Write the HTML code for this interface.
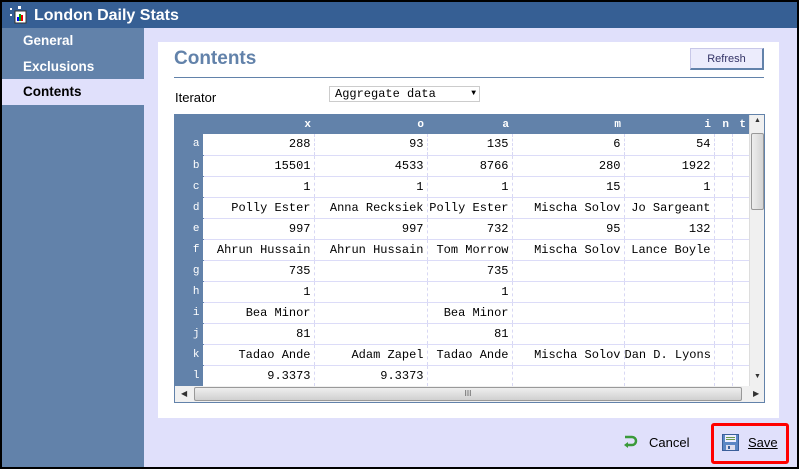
<!DOCTYPE html>
<html><head><meta charset="utf-8"><style>
*{margin:0;padding:0;box-sizing:border-box}
body{width:799px;height:469px;background:#000;position:relative;overflow:hidden;font-family:"Liberation Sans",sans-serif}
.abs{position:absolute}
#title{left:2px;top:2px;width:795px;height:26px;background:#365f94;color:#fff;font-weight:bold;font-size:16px;line-height:27px;padding-left:32px}
#side{left:2px;top:28px;width:142px;height:439px;background:#6282aa}
.nav{position:absolute;left:0;width:142px;height:26px;font-weight:bold;font-size:13.5px;color:#fff;padding-left:21px;line-height:26px}
#main{left:144px;top:28px;width:653px;height:439px;background:#e0e0fb}
#panel{left:158px;top:42px;width:621px;height:376px;background:#fff}
.mono{font-family:"Liberation Mono",monospace;font-size:12px}
table{border-collapse:collapse;table-layout:fixed}
td{height:21px;border-bottom:1px solid #dcdcf8;border-right:1px dashed #d8d8f4;text-align:right;padding-right:3px;white-space:nowrap;overflow:hidden;font-family:"Liberation Mono",monospace;font-size:12px;color:#000}
td.h{background:#6282aa;color:#fff;border-right:1px dashed #fff;border-bottom:1px solid #6282aa;font-size:11px}
tr.hd td{background:#6282aa;color:#fff;height:19px;border:none;font-size:11px;font-weight:bold}
</style></head><body>
<div id="title" class="abs">London Daily Stats</div>
<svg class="abs" style="left:7px;top:6px" width="22" height="18" viewBox="0 0 22 18">
<rect x="3" y="2" width="2" height="2" fill="#fff"/><rect x="3" y="8" width="2" height="2" fill="#fff"/>
<rect x="11" y="0" width="3" height="3" fill="#fff"/>
<rect x="8" y="5" width="11" height="12" fill="#fff" stroke="#333" stroke-width="1"/>
<rect x="10" y="11" width="2" height="4" fill="#00f"/><rect x="12" y="8" width="2" height="7" fill="#0a0"/><rect x="14" y="9" width="2" height="6" fill="#e00"/>
</svg>
<div id="side" class="abs">
<div class="nav" style="top:0">General</div>
<div class="nav" style="top:26px">Exclusions</div>
<div class="nav" style="top:51px;background:#e0e0fb;color:#000">Contents</div>
</div>
<div id="main" class="abs"></div>
<div id="panel" class="abs"></div>
<div class="abs" style="left:174px;top:48px;font-weight:bold;font-size:19px;color:#6282aa">Contents</div>
<div class="abs" style="left:690px;top:48px;width:74px;height:22px;background:#ececfc;border:1px solid #c8c8e8;border-right:2px solid #6282aa;border-bottom:2px solid #6282aa;font-size:11px;color:#333366;text-align:center;line-height:20px">Refresh</div>
<div class="abs" style="left:174px;top:77px;width:590px;height:1px;background:#6282aa"></div>
<div class="abs" style="left:175px;top:90px;font-size:13px;color:#000">Iterator</div>
<div class="abs mono" style="left:329px;top:86px;width:151px;height:16px;border:1px solid #ccc;font-size:12px;line-height:14px;padding-left:5px">Aggregate data<span style="position:absolute;right:3px;top:0;font-size:8px">▼</span></div>
<div class="abs" style="left:174px;top:114px;width:591px;height:289px;border:1px solid #6282aa;background:#fff;overflow:hidden">
<table style="width:574px">
<colgroup><col style="width:28px"><col style="width:111px"><col style="width:113px"><col style="width:85px"><col style="width:112px"><col style="width:90px"><col style="width:18px"><col style="width:17px"></colgroup>
<tr class="hd"><td></td><td>x</td><td>o</td><td>a</td><td>m</td><td>i</td><td>n</td><td>t</td></tr>
<tr><td class="h">a</td><td>288</td><td>93</td><td>135</td><td>6</td><td>54</td><td></td><td></td></tr>
<tr><td class="h">b</td><td>15501</td><td>4533</td><td>8766</td><td>280</td><td>1922</td><td></td><td></td></tr>
<tr><td class="h">c</td><td>1</td><td>1</td><td>1</td><td>15</td><td>1</td><td></td><td></td></tr>
<tr><td class="h">d</td><td>Polly Ester</td><td>Anna Recksiek</td><td>Polly Ester</td><td>Mischa Solov</td><td>Jo Sargeant</td><td></td><td></td></tr>
<tr><td class="h">e</td><td>997</td><td>997</td><td>732</td><td>95</td><td>132</td><td></td><td></td></tr>
<tr><td class="h">f</td><td>Ahrun Hussain</td><td>Ahrun Hussain</td><td>Tom Morrow</td><td>Mischa Solov</td><td>Lance Boyle</td><td></td><td></td></tr>
<tr><td class="h">g</td><td>735</td><td></td><td>735</td><td></td><td></td><td></td><td></td></tr>
<tr><td class="h">h</td><td>1</td><td></td><td>1</td><td></td><td></td><td></td><td></td></tr>
<tr><td class="h">i</td><td>Bea Minor</td><td></td><td>Bea Minor</td><td></td><td></td><td></td><td></td></tr>
<tr><td class="h">j</td><td>81</td><td></td><td>81</td><td></td><td></td><td></td><td></td></tr>
<tr><td class="h">k</td><td>Tadao Ande</td><td>Adam Zapel</td><td>Tadao Ande</td><td>Mischa Solov</td><td>Dan D. Lyons</td><td></td><td></td></tr>
<tr><td class="h">l</td><td>9.3373</td><td>9.3373</td><td></td><td></td><td></td><td></td><td></td></tr>
</table>
<div class="abs" style="left:574px;top:0;width:16px;height:271px;background:#f0f0f0;border-left:1px solid #ddd">
<div style="position:absolute;top:2px;left:4px;font-size:7px;color:#333">▲</div>
<div style="position:absolute;top:18px;left:1px;width:13px;height:77px;background:linear-gradient(90deg,#eee,#d4d4d4);border:1px solid #999;border-radius:2px"></div>
<div style="position:absolute;top:258px;left:4px;font-size:7px;color:#333">▼</div>
</div>
<div class="abs" style="left:0;top:271px;width:590px;height:17px;background:#f0f0f0">
<div style="position:absolute;left:6px;top:3px;font-size:8px;color:#333">◀</div>
<div style="position:absolute;left:19px;top:1px;width:548px;height:14px;background:linear-gradient(#eee,#d0d0d0);border:1px solid #999;border-radius:2px;text-align:center;font-size:8px;line-height:12px;color:#555">III</div>
<div style="position:absolute;left:578px;top:3px;font-size:8px;color:#333">▶</div>
</div>
</div>
<svg class="abs" style="left:622px;top:434px" width="16" height="16" viewBox="0 0 16 16"><path d="M3 3h7a4 4 0 0 1 0 8H4" fill="none" stroke="#3a9a3a" stroke-width="2.5"/><path d="M6 8l-4 3 4 3z" fill="#3a9a3a"/></svg>
<div class="abs" style="left:649px;top:435px;font-size:13px;color:#000">Cancel</div>
<div class="abs" style="left:711px;top:423px;width:78px;height:41px;border:3px solid #ff0000;border-radius:3px"></div>
<svg class="abs" style="left:722px;top:434px" width="17" height="17" viewBox="0 0 17 17"><rect x="0.5" y="0.5" width="16" height="16" fill="#5b86c4" stroke="#3a5f9a"/><rect x="3" y="1" width="11" height="7" fill="#eef"/><rect x="4" y="3" width="9" height="1" fill="#6a9a4a"/><rect x="4" y="5" width="9" height="1" fill="#6a9a4a"/><rect x="4" y="11" width="9" height="5" fill="#dde"/><rect x="6" y="12" width="2" height="3" fill="#3a5f9a"/></svg>
<div class="abs" style="left:748px;top:435px;font-size:13px;color:#000;text-decoration:underline">Save</div>
</body></html>
